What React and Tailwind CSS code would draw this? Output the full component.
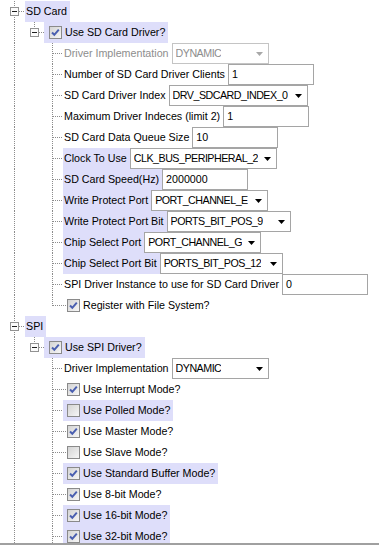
import React from "react";

const LINE = "#8c8c8c";

const rows = [
    { lvl: 0, label: "SD Card", hl: true },
    { lvl: 1, label: "Use SD Card Driver?", box: true, on: true, hl: true },
    { lvl: 2, label: "Driver Implementation", select: "DYNAMIC", w: "w-[97px]", off: true },
    { lvl: 2, label: "Number of SD Card Driver Clients", input: "1" },
    { lvl: 2, label: "SD Card Driver Index", select: "DRV_SDCARD_INDEX_0", w: "w-[139px]" },
    { lvl: 2, label: "Maximum Driver Indeces (limit 2)", input: "1" },
    { lvl: 2, label: "SD Card Data Queue Size", input: "10" },
    { lvl: 2, label: "Clock To Use", select: "CLK_BUS_PERIPHERAL_2", w: "w-[147px]", hl: true },
    { lvl: 2, label: "SD Card Speed(Hz)", input: "2000000", hl: true },
    { lvl: 2, label: "Write Protect Port", select: "PORT_CHANNEL_E", w: "w-[117px]", hl: true },
    { lvl: 2, label: "Write Protect Port Bit", select: "PORTS_BIT_POS_9", w: "w-[124px]", hl: true },
    { lvl: 2, label: "Chip Select Port", select: "PORT_CHANNEL_G", w: "w-[117px]", hl: true },
    { lvl: 2, label: "Chip Select Port Bit", select: "PORTS_BIT_POS_12", w: "w-[123px]", hl: true },
    { lvl: 2, label: "SPI Driver Instance to use for SD Card Driver", input: "0" },
    { lvl: 2, label: "Register with File System?", box: true, on: true, last: true },
    { lvl: 0, label: "SPI", hl: true },
    { lvl: 1, label: "Use SPI Driver?", box: true, on: true, hl: true },
    { lvl: 2, label: "Driver Implementation", select: "DYNAMIC", w: "w-[97px]" },
    { lvl: 2, label: "Use Interrupt Mode?", box: true, on: true },
    { lvl: 2, label: "Use Polled Mode?", box: true, on: false, hl: true },
    { lvl: 2, label: "Use Master Mode?", box: true, on: true },
    { lvl: 2, label: "Use Slave Mode?", box: true, on: false },
    { lvl: 2, label: "Use Standard Buffer Mode?", box: true, on: true, hl: true },
    { lvl: 2, label: "Use 8-bit Mode?", box: true, on: true },
    { lvl: 2, label: "Use 16-bit Mode?", box: true, on: true, hl: true },
    { lvl: 2, label: "Use 32-bit Mode?", box: true, on: true, hl: true },
];

function ExpBox({ x }) {
    return (
        <g>
            <rect x={x + 0.5} y={6.5} width={8} height={8} fill="#fbfbfb" stroke="#929292" />
            <line x1={x + 2} y1={10.5} x2={x + 7} y2={10.5} stroke="#1e1e1e" />
        </g>
    );
}

function Guide({ lvl, last }) {
    const w = [25, 44, 63][lvl];
    return (
        <svg width={w} height={21} className="shrink-0 block" shapeRendering="crispEdges">
            <line x1={14.5} y1={0} x2={14.5} y2={21} stroke={LINE} strokeDasharray="1 1" />
            {lvl === 0 && (
                <>
                    <line x1={19} y1={10.5} x2={25} y2={10.5} stroke={LINE} strokeDasharray="1 1" />
                    <ExpBox x={10} />
                </>
            )}
            {lvl === 1 && (
                <>
                    <line x1={34.5} y1={0} x2={34.5} y2={6} stroke={LINE} strokeDasharray="1 1" />
                    <line x1={39} y1={10.5} x2={44} y2={10.5} stroke={LINE} strokeDasharray="1 1" />
                    <ExpBox x={30} />
                </>
            )}
            {lvl === 2 && (
                <>
                    <line x1={52.5} y1={0} x2={52.5} y2={last ? 11 : 21} stroke={LINE} strokeDasharray="1 1" />
                    <line x1={53} y1={10.5} x2={63} y2={10.5} stroke={LINE} strokeDasharray="1 1" />
                </>
            )}
        </svg>
    );
}

function Check({ on }) {
    return (
        <svg width={13} height={13} className="shrink-0 block" shapeRendering="crispEdges">
            <defs>
                <linearGradient id="cbfill" x1="0" y1="0" x2="1" y2="1">
                    <stop offset="0" stopColor="#d2d2d2" />
                    <stop offset="1" stopColor="#f8f8f8" />
                </linearGradient>
            </defs>
            <rect x={0.5} y={0.5} width={12} height={12} fill="url(#cbfill)" stroke="#8a8a8a" />
            {on && (
                <path
                    d="M3 6.5 L5.3 8.8 L9.8 3.6"
                    fill="none"
                    stroke="#4a5fb0"
                    strokeWidth={2}
                    shapeRendering="geometricPrecision"
                />
            )}
        </svg>
    );
}

function Select({ value, w, off }) {
    return (
        <div className={`${w} h-[21px] shrink-0 flex items-center justify-between bg-white border pl-[3px] pr-[5px] ${off ? "border-[#c4c4c4] text-[#8d8d8d]" : "border-[#a5a5a5] text-black"}`}>
            <span className="whitespace-nowrap overflow-hidden tracking-[-0.5px]">{value}</span>
            <svg width={7} height={4} className="block shrink-0 ml-[4px]">
                <polygon points="0,0 7,0 3.5,4" fill={off ? "#a8a8a8" : "#000"} />
            </svg>
        </div>
    );
}

function Row({ r }) {
    const hl = r.hl ? "bg-[#dedefa]" : "";
    let item;
    if (r.box) {
        item = (
            <div className={`flex items-center h-[21px] pr-[3px] ${hl}`}>
                {r.lvl === 1 ? (
                    <span className="w-[5px]" />
                ) : r.hl ? (
                    <span className="w-[4px]" />
                ) : (
                    <svg width={4} height={21} className="block" shapeRendering="crispEdges">
                        <line x1={0} y1={10.5} x2={4} y2={10.5} stroke={LINE} strokeDasharray="1 1" />
                    </svg>
                )}
                <Check on={r.on} />
                <span className="pl-[3px] whitespace-nowrap">{r.label}</span>
            </div>
        );
    } else {
        item = (
            <>
                <div className={`flex items-center h-[21px] pl-[1px] pr-[3px] whitespace-nowrap ${hl} ${r.off ? "text-[#8d8d8d]" : ""}`}>
                    {r.label}
                </div>
                {r.select && <Select value={r.select} w={r.w} off={r.off} />}
                {r.input && (
                    <div className="w-[86px] h-[21px] shrink-0 flex items-center bg-white border border-[#a5a5a5] pl-[3px]">
                        {r.input}
                    </div>
                )}
            </>
        );
    }
    return (
        <div className="flex items-center h-[21px]">
            <Guide lvl={r.lvl} last={r.last} />
            {item}
        </div>
    );
}

export default function App() {
    return (
        <div className="w-[379px] h-[545px] bg-white overflow-hidden flex flex-col text-black text-[10.7px] leading-none font-['Liberation_Sans',Arial,sans-serif]">
            <div className="h-[543px] overflow-hidden pt-[1px]">
                {rows.map((r, i) => (
                    <Row key={i} r={r} />
                ))}
            </div>
            <div className="h-[2px] bg-[#a0a0a0]" />
        </div>
    );
}
